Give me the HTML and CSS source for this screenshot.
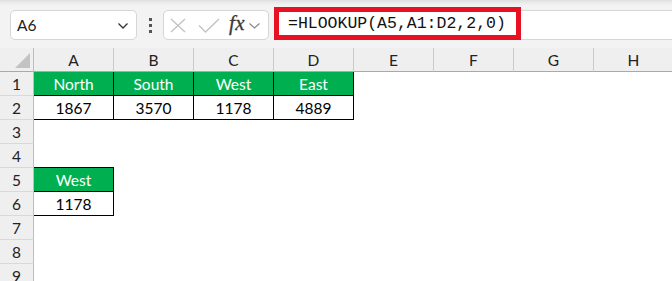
FILE: index.html
```html
<!DOCTYPE html>
<html>
<head>
<meta charset="utf-8">
<link rel="stylesheet" href="styles.css">
</head>
<body>
<div class="toolbar">
  <div class="namebox">
    <span class="nb-text">A6</span>
    <svg class="nb-chev" width="10" height="6" viewBox="0 0 10 6"><polyline points="0.5,0.5 5,5 9.5,0.5" fill="none" stroke="#333" stroke-width="1.3"/></svg>
  </div>
  <div class="dots"><i></i><i></i><i></i></div>
  <div class="fxbox">
    <svg width="16" height="15" viewBox="0 0 16 15" class="ic-x"><path d="M1 1 L15 14 M15 1 L1 14" stroke="#c3c3c3" stroke-width="1.4" fill="none"/></svg>
    <svg width="22" height="15" viewBox="0 0 22 15" class="ic-ok"><polyline points="1,7.5 7.5,14 21,1" stroke="#c3c3c3" stroke-width="1.4" fill="none"/></svg>
    <span class="fx">fx</span>
    <svg width="11" height="6" viewBox="0 0 11 6" class="ic-chev"><polyline points="0.5,0.5 5.5,5 10.5,0.5" fill="none" stroke="#8a8a8a" stroke-width="1.2"/></svg>
  </div>
  <div class="input">
    <div class="highlight"><span class="formula">=HLOOKUP(A5,A1:D2,2,0)</span></div>
  </div>
</div>
<div class="sheet">
  <div class="corner"><span class="tri"></span></div>
  <div class="ch">A</div><div class="ch">B</div><div class="ch">C</div><div class="ch">D</div><div class="ch">E</div><div class="ch">F</div><div class="ch">G</div><div class="ch">H</div>

  <div class="rh">1</div>
  <div class="c t g">North</div><div class="c t g">South</div><div class="c t g">West</div><div class="c t g">East</div><div class="c"></div><div class="c"></div><div class="c"></div><div class="c"></div>

  <div class="rh">2</div>
  <div class="c t">1867</div><div class="c t">3570</div><div class="c t">1178</div><div class="c t">4889</div><div class="c"></div><div class="c"></div><div class="c"></div><div class="c"></div>

  <div class="rh">3</div>
  <div class="c"></div><div class="c"></div><div class="c"></div><div class="c"></div><div class="c"></div><div class="c"></div><div class="c"></div><div class="c"></div>

  <div class="rh">4</div>
  <div class="c tb"></div><div class="c"></div><div class="c"></div><div class="c"></div><div class="c"></div><div class="c"></div><div class="c"></div><div class="c"></div>

  <div class="rh">5</div>
  <div class="c t g">West</div><div class="c"></div><div class="c"></div><div class="c"></div><div class="c"></div><div class="c"></div><div class="c"></div><div class="c"></div>

  <div class="rh">6</div>
  <div class="c t">1178</div><div class="c"></div><div class="c"></div><div class="c"></div><div class="c"></div><div class="c"></div><div class="c"></div><div class="c"></div>

  <div class="rh">7</div>
  <div class="c"></div><div class="c"></div><div class="c"></div><div class="c"></div><div class="c"></div><div class="c"></div><div class="c"></div><div class="c"></div>

  <div class="rh">8</div>
  <div class="c"></div><div class="c"></div><div class="c"></div><div class="c"></div><div class="c"></div><div class="c"></div><div class="c"></div><div class="c"></div>

  <div class="rh">9</div>
  <div class="c"></div><div class="c"></div><div class="c"></div><div class="c"></div><div class="c"></div><div class="c"></div><div class="c"></div><div class="c"></div>
</div>
</body>
</html>
```

FILE: styles.css
```css
* { box-sizing: border-box; }
html, body { margin: 0; padding: 0; }
body {
  width: 672px;
  height: 281px;
  overflow: hidden;
  background: #fff;
  font-family: Lato, "Liberation Sans", sans-serif;
  font-size: 15.5px;
  color: #000;
}

.toolbar {
  height: 48px;
  background: linear-gradient(#dedede 0px, #ececec 3px, #f3f3f3 6px, #f3f3f3 100%);
  display: flex;
  align-items: flex-start;
  padding: 10px 0 0 10px;
}
.namebox {
  width: 127px;
  height: 30px;
  background: #fff;
  border: 1px solid #d6d6d6;
  border-radius: 5px;
  display: flex;
  align-items: center;
  justify-content: space-between;
  padding: 0 8px 0 6px;
  color: #222;
}
.nb-text { font-size: 15.5px; }
.nb-chev { margin-top: 1px; }

.dots {
  width: 26px;
  height: 30px;
  display: flex;
  flex-direction: column;
  align-items: center;
  justify-content: center;
  gap: 3px;
}
.dots i {
  display: block;
  width: 3px;
  height: 3px;
  background: #555;
}

.fxbox {
  width: 106px;
  height: 30px;
  background: #fff;
  border: 1px solid #d6d6d6;
  border-radius: 5px;
  display: flex;
  align-items: center;
  padding-left: 6px;
}
.ic-x { margin-right: 12px; }
.ic-ok { margin-right: 9px; }
.fx {
  font-family: "Liberation Serif", serif;
  font-style: italic;
  font-size: 21px;
  color: #3a3a3a;
  letter-spacing: 0.5px;
  margin-right: 4px;
  margin-top: -3px;
  -webkit-text-stroke: 0.3px #3a3a3a;
}
.ic-chev { margin-top: 2px; }

.input {
  flex: 1;
  margin-left: 5px;
  height: 30px;
  background: #fff;
  border-top: 1px solid #d6d6d6;
  border-bottom: 1px solid #d6d6d6;
  position: relative;
}
.highlight {
  position: absolute;
  left: 0;
  top: -4px;
  width: 247px;
  height: 33px;
  border: 5px solid #e81123;
  padding-left: 9px;
}
.formula {
  font-family: "Liberation Mono", monospace;
  font-size: 16.5px;
  line-height: 24px;
  color: #111;
  white-space: nowrap;
}

.sheet {
  display: grid;
  grid-template-columns: 34px repeat(8, 80px);
  grid-auto-rows: 24px;
}
.corner {
  background: #efefef;
  border-right: 1px solid #bdbdbd;
  border-bottom: 1px solid #a9a9a9;
  position: relative;
}
.tri {
  position: absolute;
  right: 3px;
  bottom: 3px;
  width: 0;
  height: 0;
  border-left: 15px solid transparent;
  border-bottom: 15px solid #c3c3c3;
}
.ch {
  background: #efefef;
  border-right: 1px solid #cacaca;
  border-bottom: 1px solid #a9a9a9;
  display: flex;
  align-items: center;
  justify-content: center;
  color: #222;
  padding-top: 1px;
}
.rh {
  background: #efefef;
  border-right: 1px solid #bdbdbd;
  border-bottom: 1px solid #d9d9d9;
  display: flex;
  align-items: center;
  justify-content: center;
  color: #222;
  padding-top: 1px;
}
.c {
  display: flex;
  align-items: center;
  justify-content: center;
  padding-top: 1px;
}
.t {
  border-right: 1px solid #000;
  border-bottom: 1px solid #000;
}
.tb { border-bottom: 1px solid #000; }
.g {
  background: #00b050;
  color: #fff;
}
```
